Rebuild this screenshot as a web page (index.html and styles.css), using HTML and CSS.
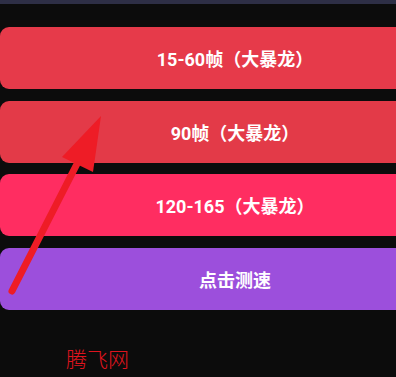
FILE: index.html
```html
<!DOCTYPE html>
<html lang="zh-CN">
<head>
  <meta charset="UTF-8" />
  <title>帧率选择</title>
  <link rel="stylesheet" href="styles.css">
</head>
<body>
  <div class="topbar"></div>

  <div class="btn-list">
    <div class="mode-btn red">15-60帧（大暴龙）</div>
    <div class="mode-btn red2">90帧（大暴龙）</div>
    <div class="mode-btn pink">120-165（大暴龙）</div>
    <div class="mode-btn purple">点击测速</div>
  </div>

  <div class="watermark">腾飞网</div>

  <!-- annotation arrow -->
  <svg class="arrow" width="396" height="377" viewBox="0 0 396 377">
    <line x1="12" y1="291" x2="80" y2="158" stroke="#ee1c26" stroke-width="7" stroke-linecap="round"/>
    <polygon points="101,116 62,157 93,172" fill="#ee1c26"/>
  </svg>
</body>
</html>
```

FILE: styles.css
```css
body {
  margin: 0;
  background-color: #0c0c0c;
  font-family: Roboto, "Noto Sans CJK SC", sans-serif;
  width: 396px;
  height: 377px;
  overflow: hidden;
  position: relative;
}
.topbar {
  height: 4px;
  background-color: #2e2f46;
}
.btn-list {
  display: flex;
  flex-direction: column;
  gap: 11.5px;
  margin-top: 23px;
}
/* buttons run off the right edge, so only the left corners show */
.mode-btn {
  height: 62px;
  border-radius: 9px 0 0 9px;
  padding-left: 74px;
  display: flex;
  align-items: center;
  justify-content: center;
  color: #fff;
  font-size: 18px;
  font-weight: bold;
}
.mode-btn.red {
  background-color: #e63a4a;
}
.mode-btn.red2 {
  background-color: #e33a48;
}
.mode-btn.pink {
  background-color: #ff2d61;
}
.mode-btn.purple {
  background-color: #9c4fdc;
}
.watermark {
  margin-top: 36px;
  padding-left: 66px;
  color: #e0141e;
  font-family: "Noto Sans CJK SC", sans-serif;
  font-weight: 300;
  font-size: 21px;
  line-height: 24px;
}
.arrow {
  position: absolute;
  left: 0;
  top: 0;
}
```
